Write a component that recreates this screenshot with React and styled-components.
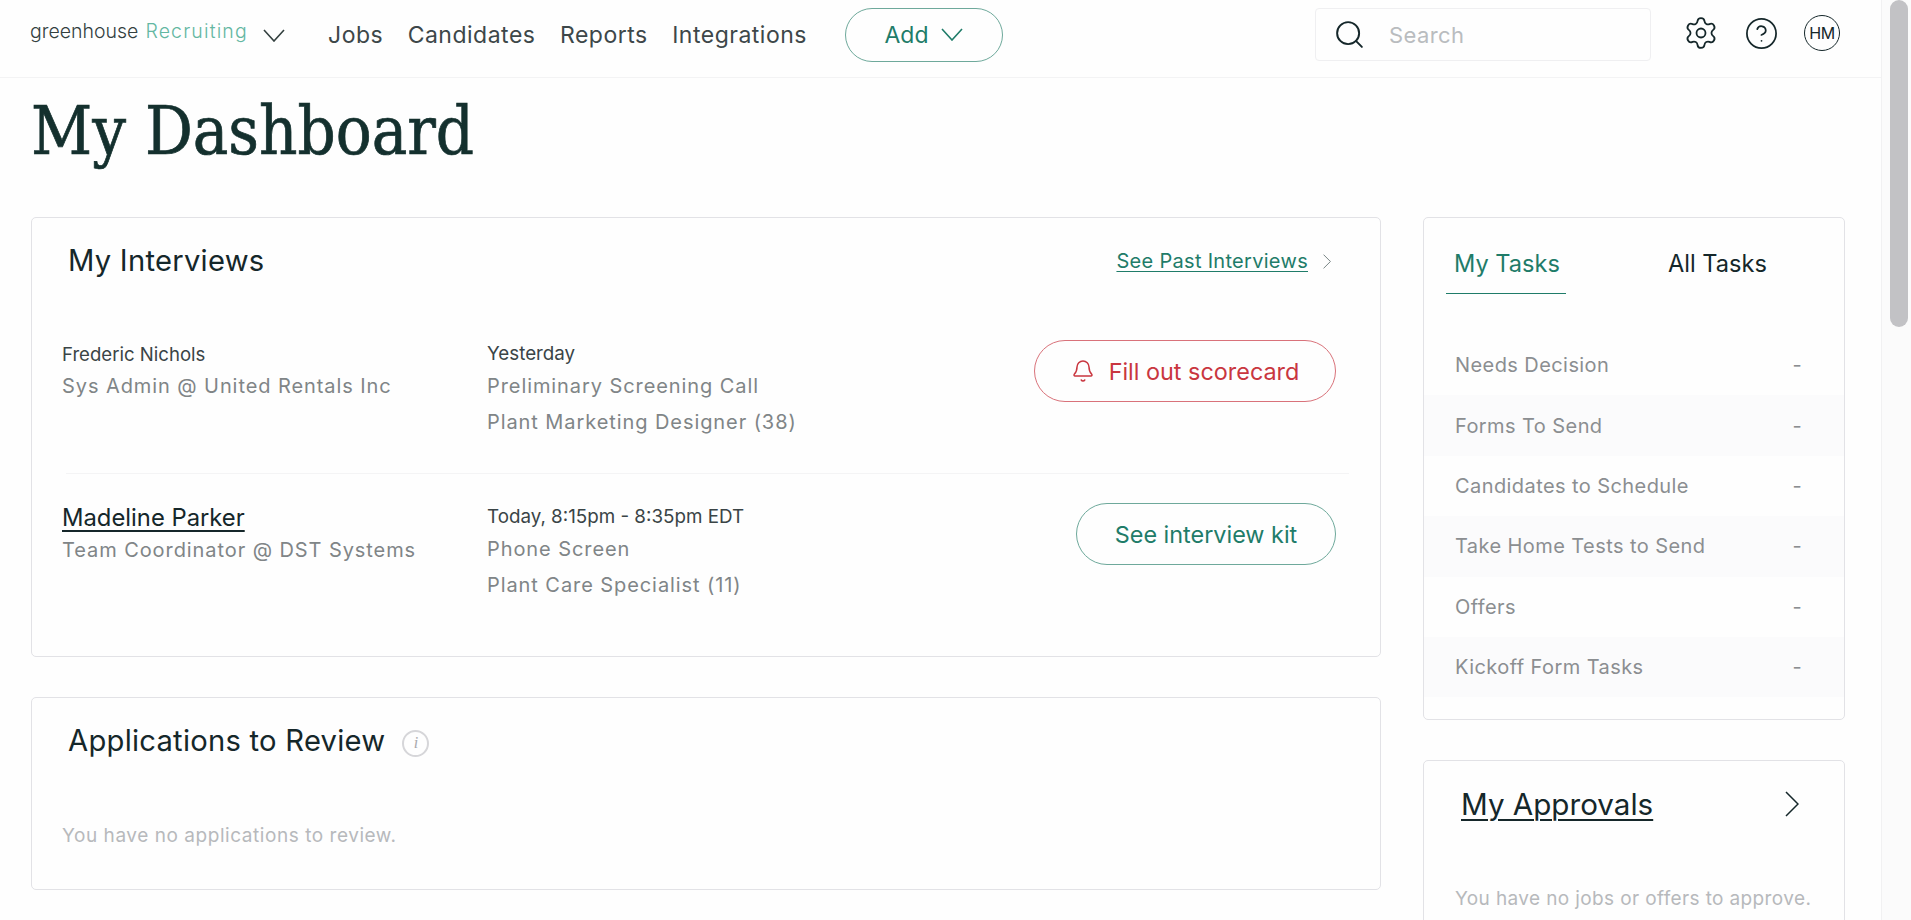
import styled, { createGlobalStyle } from 'styled-components'
import { Search, Settings, CircleHelp, Bell } from 'lucide-react'

const Global = createGlobalStyle`
  html, body {
    margin: 0;
    height: 100%;
    overflow: hidden;
    background: #fefefe;
  }
  body {
    font-family: Inter, "Liberation Sans", sans-serif;
    color: #15272a;
  }
  * { box-sizing: border-box; }
`

const green = '#1f7c69'
const red = '#c9363f'

const Page = styled.div`
  display: flex;
  width: 1911px;
  height: 920px;
  overflow: hidden;
`

const Main = styled.div`
  width: 1881px;
  flex: none;
`

const ScrollRail = styled.div`
  width: 30px;
  flex: none;
  background: #fbfbfb;
  border-left: 1px solid #f1f1f2;
  padding-left: 8px;
`

const ScrollThumb = styled.div`
  width: 18px;
  height: 327px;
  background: #c2c2c5;
  border-radius: 9px;
`

const Header = styled.header`
  display: flex;
  align-items: center;
  height: 78px;
  padding: 0 41px 8px 30px;
  border-bottom: 1px solid #f3f3f4;
`

const Logo = styled.div`
  display: flex;
  align-items: baseline;
  gap: 7px;
  width: 233px;
  flex: none;
  margin-top: -7px;
  font-size: 19.5px;
  font-weight: 300;
  color: #33403f;
  span { color: #63b7a2; letter-spacing: 1.15px; }
`

const Chev = styled.svg`
  flex: none;
  fill: none;
  stroke: ${p => p.$color || '#33403f'};
  stroke-width: ${p => p.$weight || 1.6};
`

const LogoChev = styled(Chev)`
  width: 22px;
  height: 13px;
  margin-right: 43px;
  margin-top: 2px;
`

const Nav = styled.nav`
  display: flex;
  gap: 24.5px;
  width: 517px;
  flex: none;
`

const NavLink = styled.a`
  font-size: 23px;
  letter-spacing: 0.5px;
  color: #3d4749;
  white-space: nowrap;
`

const AddButton = styled.button`
  display: flex;
  align-items: center;
  justify-content: center;
  gap: 11px;
  width: 158px;
  height: 54px;
  flex: none;
  background: none;
  border: 1.5px solid #6ea99b;
  border-radius: 27px;
  font: inherit;
  font-size: 23px;
  color: ${green};
`

const SearchBox = styled.div`
  display: flex;
  align-items: center;
  gap: 23px;
  width: 336px;
  height: 53px;
  margin-left: auto;
  padding-left: 17px;
  border: 1px solid #efeff1;
  border-radius: 4px;
  font-size: 22px;
  letter-spacing: 0.4px;
  color: #b9bcbf;
  svg { color: #15272a; }
`

const Tools = styled.div`
  display: flex;
  align-items: center;
  gap: 25px;
  margin-left: 32px;
  margin-top: -3px;
  color: #15272a;
`

const Avatar = styled.div`
  display: grid;
  place-items: center;
  width: 36px;
  height: 36px;
  border: 1.5px solid #15272a;
  border-radius: 50%;
  font-size: 16px;
  letter-spacing: -0.5px;
`

const Title = styled.h1`
  margin: 0;
  height: 139px;
  padding: 13px 0 0 31px;
  font-family: "DejaVu Serif Condensed", "DejaVu Serif", "Liberation Serif", serif;
  font-stretch: condensed;
  font-size: 66.4px;
  line-height: 80px;
  font-weight: 400;
  color: #14302e;
  -webkit-text-stroke: 0.7px #14302e;
  white-space: nowrap;
`

const Columns = styled.div`
  display: grid;
  grid-template-columns: 1350px 422px;
  gap: 42px;
  padding-left: 31px;
`

const Stack = styled.div`
  display: flex;
  flex-direction: column;
  gap: ${p => p.$gap}px;
`

const Card = styled.section`
  background: #fefefe;
  border: 1px solid #e2e2e6;
  border-radius: 5px;
`

const CardHead = styled.div`
  display: flex;
  align-items: center;
  height: 32px;
  margin: 27px 49px 0 36px;
`

const CardTitle = styled.h2`
  margin: 0;
  font-size: 29.2px;
  line-height: 32px;
  font-weight: 400;
  letter-spacing: 0.25px;
  color: #15272a;
`

const PastLink = styled.a`
  display: flex;
  align-items: center;
  gap: 15px;
  margin-left: auto;
  font-size: 20px;
  letter-spacing: 0.3px;
  color: ${green};
  u { text-underline-offset: 3px; text-decoration-thickness: 1px; }
`

const Row = styled.div`
  display: grid;
  grid-template-columns: 425px 1fr auto;
  padding: ${p => p.$top}px 44px ${p => p.$bottom}px 30px;
`

const Person = styled.div`
  font-size: ${p => (p.$link ? 23.8 : 18.6)}px;
  line-height: 32px;
  color: #3a4446;
  ${p => p.$link && `
    color: #15272a;
    width: fit-content;
    text-decoration: underline;
    text-underline-offset: 4px;
    text-decoration-thickness: 1.5px;
    margin-top: 1px;
  `}
`

const Sub = styled.div`
  font-size: 20px;
  line-height: 32px;
  letter-spacing: 0.92px;
  color: #808587;
  white-space: nowrap;
  & + & { margin-top: 4px; }
`

const Time = styled.div`
  font-size: 18.8px;
  line-height: 32px;
  color: #3a4446;
`

const Divider = styled.div`
  height: 1px;
  margin: 0 31px 0 34px;
  background: #f4f4f5;
`

const Pill = styled.button`
  display: flex;
  align-items: center;
  justify-content: center;
  gap: 14px;
  height: 62px;
  width: ${p => p.$width}px;
  margin-top: 2px;
  background: none;
  border: 1.5px solid ${p => (p.$danger ? '#d9727a' : '#6ea99b')};
  border-radius: 31px;
  font: inherit;
  font-size: 23.4px;
  color: ${p => (p.$danger ? red : green)};
`

const InfoDot = styled.span`
  display: grid;
  place-items: center;
  width: 27px;
  height: 27px;
  margin: 4px 0 0 17px;
  border: 2px solid #d6d6d9;
  border-radius: 50%;
  font-family: "Liberation Serif", serif;
  font-style: italic;
  font-size: 16px;
  color: #a9a9ad;
`

const Empty = styled.p`
  margin: ${p => p.$top}px 0 ${p => p.$bottom}px ${p => p.$left}px;
  font-size: 19px;
  line-height: 30px;
  letter-spacing: ${p => p.$spacing}px;
  color: #b7b9bc;
  white-space: nowrap;
`

const Tabs = styled.div`
  display: grid;
  grid-template-columns: 222px 1fr;
  height: 117px;
  padding: 28px 0 0 22px;
`

const Tab = styled.div`
  width: ${p => p.$active ? '120px' : 'auto'};
  height: 48px;
  padding: 2px 0 0 ${p => (p.$active ? 8 : 0)}px;
  font-size: 23.6px;
  line-height: 32px;
  color: ${p => (p.$active ? green : '#15272a')};
  border-bottom: ${p => (p.$active ? `1.5px solid ${green}` : 'none')};
`

const TaskRow = styled.div`
  display: flex;
  align-items: center;
  justify-content: space-between;
  height: 60.4px;
  padding: 0 42px 0 31px;
  font-size: 20px;
  letter-spacing: 0.42px;
  color: #8b8e91;
  &:nth-child(even) { background: #fbfbfc; }
  &:last-child { margin-bottom: 21.6px; }
`

const ApprovalHead = styled.div`
  display: flex;
  align-items: center;
  justify-content: space-between;
  padding: 23px 45px 0 37px;
  font-size: 29.6px;
  line-height: 40px;
  color: #15272a;
  u { text-underline-offset: 4px; text-decoration-thickness: 1.5px; }
`

function ChevronDownIcon({ as: Wrap = Chev, ...rest }) {
  return (
    <Wrap viewBox="0 0 22 13" {...rest}>
      <polyline points="1,1 11,12 21,1" />
    </Wrap>
  )
}

function ChevronRightIcon({ width, height, ...rest }) {
  return (
    <Chev viewBox="0 0 14 26" style={{ width, height }} {...rest}>
      <polyline points="1,1 13,13 1,25" />
    </Chev>
  )
}

const tasks = [
  'Needs Decision',
  'Forms To Send',
  'Candidates to Schedule',
  'Take Home Tests to Send',
  'Offers',
  'Kickoff Form Tasks',
]

export default function App() {
  return (
    <Page>
      <Global />
      <Main>
        <Header>
          <Logo>greenhouse <span>Recruiting</span></Logo>
          <ChevronDownIcon as={LogoChev} />
          <Nav>
            <NavLink>Jobs</NavLink>
            <NavLink>Candidates</NavLink>
            <NavLink>Reports</NavLink>
            <NavLink>Integrations</NavLink>
          </Nav>
          <AddButton>
            Add
            <ChevronDownIcon $color={green} style={{ width: 24, height: 13 }} />
          </AddButton>
          <SearchBox>
            <Search size={33} strokeWidth={1.4} />
            Search
          </SearchBox>
          <Tools>
            <Settings size={36} strokeWidth={1.2} />
            <CircleHelp size={35} strokeWidth={1.2} />
            <Avatar>HM</Avatar>
          </Tools>
        </Header>

        <Title>My Dashboard</Title>

        <Columns>
          <Stack $gap={40}>
            <Card>
              <CardHead>
                <CardTitle>My Interviews</CardTitle>
                <PastLink>
                  <u>See Past Interviews</u>
                  <ChevronRightIcon width={8} height={15} $color="#6b7a7a" $weight={1.6} />
                </PastLink>
              </CardHead>
              <Row $top={61} $bottom={35}>
                <div>
                  <Person>Frederic Nichols</Person>
                  <Sub>Sys Admin @ United Rentals Inc</Sub>
                </div>
                <div>
                  <Time>Yesterday</Time>
                  <Sub>Preliminary Screening Call</Sub>
                  <Sub>Plant Marketing Designer (38)</Sub>
                </div>
                <Pill $danger $width={302}>
                  <Bell size={24} strokeWidth={1.5} />
                  Fill out scorecard
                </Pill>
              </Row>
              <Divider />
              <Row $top={27} $bottom={55}>
                <div>
                  <Person $link>Madeline Parker</Person>
                  <Sub>Team Coordinator @ DST Systems</Sub>
                </div>
                <div>
                  <Time>Today, 8:15pm - 8:35pm EDT</Time>
                  <Sub>Phone Screen</Sub>
                  <Sub>Plant Care Specialist (11)</Sub>
                </div>
                <Pill $width={260}>See interview kit</Pill>
              </Row>
            </Card>

            <Card>
              <CardHead>
                <CardTitle>Applications to Review</CardTitle>
                <InfoDot>i</InfoDot>
              </CardHead>
              <Empty $top={64} $bottom={38} $left={30} $spacing={0.55}>You have no applications to review.</Empty>
            </Card>
          </Stack>

          <Stack $gap={40}>
            <Card>
              <Tabs>
                <Tab $active>My Tasks</Tab>
                <Tab>All Tasks</Tab>
              </Tabs>
              <div>
                {tasks.map(t => (
                  <TaskRow key={t}>
                    <span>{t}</span>
                    <span>-</span>
                  </TaskRow>
                ))}
              </div>
            </Card>

            <Card>
              <ApprovalHead>
                <u>My Approvals</u>
                <ChevronRightIcon width={14} height={26} $color="#15272a" $weight={1.5} />
              </ApprovalHead>
              <Empty $top={60} $bottom={40} $left={31} $spacing={0.38}>You have no jobs or offers to approve.</Empty>
            </Card>
          </Stack>
        </Columns>
      </Main>
      <ScrollRail>
        <ScrollThumb />
      </ScrollRail>
    </Page>
  )
}
